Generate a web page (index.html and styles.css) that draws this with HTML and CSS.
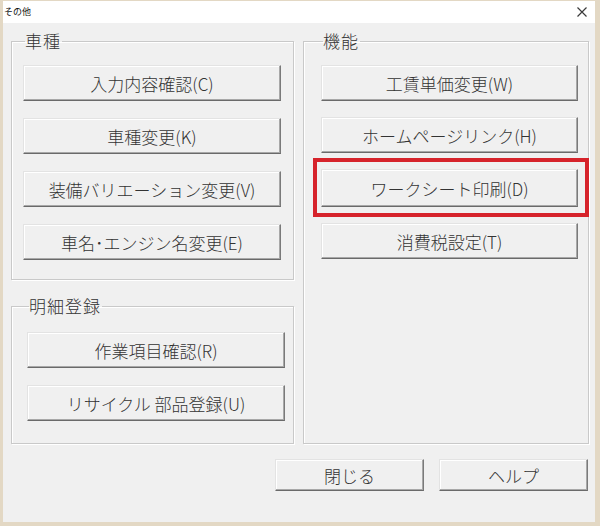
FILE: index.html
```html
<!DOCTYPE html>
<html lang="ja">
<head>
<meta charset="utf-8">
<title>その他</title>
<link rel="stylesheet" href="styles.css">
</head>
<body>
<div class="window">
  <div class="titlebar">
    <span class="title">その他</span>
    <svg class="close" width="10" height="10" viewBox="0 0 10 10"><path d="M0.5 0.5 L9.5 9.5 M9.5 0.5 L0.5 9.5" stroke="#3a3a3a" stroke-width="1.2" fill="none"/></svg>
  </div>
  <div class="content">
    <div class="columns">
      <div class="leftcol">
        <fieldset class="group g-car">
          <legend>車種</legend>
          <button class="btn">入力内容確認(C)</button>
          <button class="btn">車種変更(K)</button>
          <button class="btn">装備バリエーション変更(V)</button>
          <button class="btn">車名･エンジン名変更(E)</button>
        </fieldset>
        <fieldset class="group g-detail">
          <legend>明細登録</legend>
          <button class="btn">作業項目確認(R)</button>
          <button class="btn">リサイクル 部品登録(U)</button>
        </fieldset>
      </div>
      <fieldset class="group g-func">
        <legend>機能</legend>
        <button class="btn">工賃単価変更(W)</button>
        <button class="btn">ホームページリンク(H)</button>
        <div class="mark"><button class="btn">ワークシート印刷(D)</button></div>
        <button class="btn">消費税設定(T)</button>
      </fieldset>
    </div>
    <div class="footer">
      <button class="btn btn-foot">閉じる</button>
      <button class="btn btn-foot">ヘルプ</button>
    </div>
  </div>
</div>
</body>
</html>
```
FILE: styles.css
```css
html, body {
  margin: 0;
  padding: 0;
}
body {
  background: #e3d8c4;
  width: 600px;
  height: 526px;
  overflow: hidden;
  font-family: "Noto Sans CJK JP", "Liberation Sans", sans-serif;
  color: #333;
}
.window {
  margin: 1px 0 0 3px;
  width: 592px;
  height: 521px;
  background: #f0f0f0;
  display: flex;
  flex-direction: column;
}
.titlebar {
  height: 22px;
  background: #fff;
  display: flex;
  align-items: center;
  justify-content: space-between;
  padding: 0 8px 0 1px;
  box-sizing: border-box;
}
.title {
  font-size: 9px;
  line-height: 12px;
  color: #111;
}
.close {
  display: block;
  margin-top: -1px;
}
.content {
  padding: 8px 6px 0 8px;
  display: flex;
  flex-direction: column;
}
.columns {
  display: flex;
  gap: 9px;
  height: 413px;
}
.leftcol {
  width: 283px;
  display: flex;
  flex-direction: column;
  gap: 16px;
}
.group {
  margin: 0;
  border: 1px solid #c9c9c9;
  box-shadow: inset 1px 1px 0 #fff, 1px 1px 0 #fff;
  display: flex;
  flex-direction: column;
  min-width: 0;
  box-sizing: border-box;
}
.group legend {
  font-size: 17px;
  font-weight: 300;
  line-height: 20px;
  letter-spacing: 1px;
  padding: 0 1px 0 0;
  margin-left: 2px;
  color: #333;
}
.g-car {
  padding: 14px 11px 0 11px;
  gap: 17px;
  height: 249px;
}
.g-detail {
  padding: 16px 6px 0 15px;
  gap: 17px;
  flex: 1;
}
.g-func {
  width: 286px;
  padding: 14px 10px 0 17px;
  gap: 16px;
}
.btn {
  font-family: "Noto Sans CJK JP", "Liberation Sans", sans-serif;
  font-size: 17px;
  font-weight: 300;
  color: #333;
  height: 36px;
  width: 258px;
  padding: 0;
  box-sizing: border-box;
  background: #f0f0f0;
  border: 1px solid;
  border-color: #e3e3e3 #7a7a7a #6a6a6a #e3e3e3;
  box-shadow: inset -1px -1px 0 #a8a8a8, inset 1px 1px 0 #fff;
  display: flex;
  align-items: center;
  justify-content: center;
  line-height: 1;
  padding-top: 1px;
}
.g-func .btn {
  width: 257px;
}
.mark {
  position: relative;
  width: 257px;
}
.mark .btn {
  height: 38px;
}
.mark::after {
  content: "";
  position: absolute;
  top: -11px;
  bottom: -10px;
  left: -8px;
  right: -11px;
  border: 4px solid #d6232b;
  pointer-events: none;
}
.footer {
  display: flex;
  justify-content: flex-end;
  gap: 15px;
  margin-top: 15px;
  padding-right: 1px;
}
.btn-foot {
  width: 149px;
  height: 32px;
}
```
